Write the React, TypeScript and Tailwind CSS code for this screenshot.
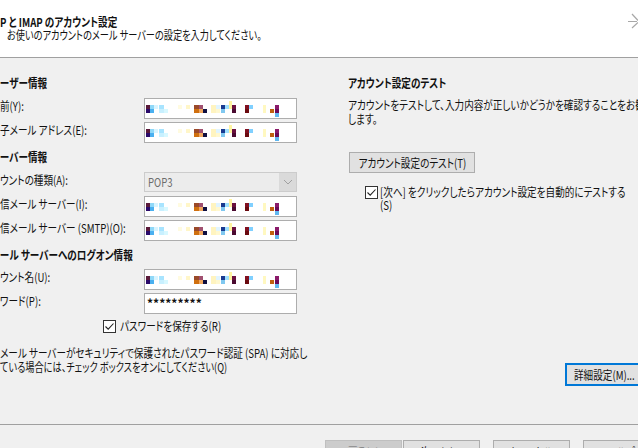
import React from "react";

// pixel-mosaic that hides the personal values inside the text boxes
const mosaic = [
  { x: 1, y: 7, w: 4, h: 4, c: "#5a1a3a" },
  { x: 1, y: 11, w: 4, h: 4, c: "#2a0a6a" },
  { x: 5, y: 7, w: 4, h: 4, c: "#8fd8f8" },
  { x: 5, y: 11, w: 4, h: 4, c: "#4ab0f0" },
  { x: 9, y: 7, w: 4, h: 4, c: "#d8f4ff" },
  { x: 14, y: 7, w: 5, h: 4, c: "#a8e4ff" },
  { x: 14, y: 11, w: 5, h: 4, c: "#c8f0ff" },
  { x: 19, y: 11, w: 4, h: 4, c: "#d8f8ff" },
  { x: 33, y: 7, w: 4, h: 4, c: "#fffbe0" },
  { x: 41, y: 7, w: 4, h: 4, c: "#fff6c8" },
  { x: 49, y: 7, w: 5, h: 4, c: "#9a4a2a" },
  { x: 49, y: 11, w: 5, h: 4, c: "#d07010" },
  { x: 54, y: 7, w: 4, h: 4, c: "#a05070" },
  { x: 54, y: 11, w: 4, h: 4, c: "#f0a860" },
  { x: 58, y: 11, w: 4, h: 4, c: "#101040" },
  { x: 66, y: 7, w: 5, h: 8, c: "#fff4c0" },
  { x: 71, y: 7, w: 4, h: 4, c: "#e0f4ff" },
  { x: 71, y: 11, w: 4, h: 4, c: "#fff8d0" },
  { x: 76, y: 7, w: 4, h: 4, c: "#1a3a90" },
  { x: 76, y: 11, w: 4, h: 4, c: "#80c8f0" },
  { x: 80, y: 7, w: 4, h: 4, c: "#a0e0ff" },
  { x: 84, y: 3, w: 3, h: 8, c: "#fff4a0" },
  { x: 87, y: 7, w: 4, h: 4, c: "#6a1040" },
  { x: 87, y: 11, w: 4, h: 4, c: "#4a0a30" },
  { x: 100, y: 7, w: 4, h: 4, c: "#801020" },
  { x: 100, y: 11, w: 4, h: 4, c: "#6a0a10" },
  { x: 104, y: 7, w: 4, h: 4, c: "#80d0ff" },
  { x: 118, y: 7, w: 3, h: 8, c: "#fff8c0" },
  { x: 125, y: 11, w: 4, h: 4, c: "#c06010" },
  { x: 130, y: 7, w: 4, h: 4, c: "#8a1a6a" },
  { x: 130, y: 11, w: 4, h: 4, c: "#6a0a5a" },
  { x: 130, y: 15, w: 4, h: 4, c: "#60b8f0" },
];

// narrow UI text: Noto's kana are wider than the dialog font, so squeeze horizontally
const T = ({
  children,
  center = false,
  narrow = false,
}: {
  children: React.ReactNode;
  center?: boolean;
  narrow?: boolean;
}) => (
  <span
    className={`inline-block whitespace-nowrap ${narrow ? "scale-x-[0.765]" : "scale-x-[0.8]"} ${
      center ? "origin-center" : "origin-left"
    }`}
  >
    {children}
  </span>
);

const Masked = () => (
  <div className="h-[21px] w-[153px] shrink-0 border border-[#adadad] bg-white">
    <svg width="151" height="19" viewBox="0 0 151 19">
      {mosaic.map((m, i) => (
        <rect key={i} x={m.x} y={m.y - 1} width={m.w} height={m.h} fill={m.c} />
      ))}
    </svg>
  </div>
);

const Check = ({ className = "" }: { className?: string }) => (
  <span
    className={`flex h-[13px] w-[13px] shrink-0 items-center justify-center border border-[#333] bg-white ${className}`}
  >
    <svg width="11" height="11" viewBox="0 0 11 11">
      <path d="M1.5 5.5 L4.2 8.2 L9.5 2.5" fill="none" stroke="#222" strokeWidth="1.1" />
    </svg>
  </span>
);

const Row = ({ label, children, className = "" }: { label: string; children: React.ReactNode; className?: string }) => (
  <div className={`flex items-start ${className}`}>
    <span className="w-[144px] shrink-0 overflow-hidden">
      <T>{label}</T>
    </span>
    {children}
  </div>
);

const Heading = ({ children, className = "" }: { children: React.ReactNode; className?: string }) => (
  <div className={`h-4 font-bold leading-4 ${className}`}>
    <T>{children}</T>
  </div>
);

const Btn = ({ children, className = "" }: { children: React.ReactNode; className?: string }) => (
  <button className={`flex h-[23px] w-[77px] shrink-0 justify-center border pt-[3px] ${className}`}>
    <T center>{children}</T>
  </button>
);

export default function App() {
  return (
    <div className="relative flex h-[448px] w-[638px] flex-col overflow-hidden bg-[#f0f0f0] font-['Noto_Sans_CJK_JP',sans-serif] text-[12px] leading-4 text-[#111] [font-feature-settings:'palt']">
      {/* title band */}
      <div className="relative h-[58px] shrink-0 border-b border-[#a0a0a0] bg-white pt-[15px] leading-[13px]">
        <div className="font-bold">
          <T>P と IMAP のアカウント設定</T>
        </div>
        <div className="pl-[7px]">
          <T narrow>お使いのアカウントのメール サーバーの設定を入力してください。</T>
        </div>
        <svg className="absolute top-[13px] left-[627px]" width="12" height="17" viewBox="0 0 12 17">
          <path d="M5 1 L11 7.5 M5 15 L11 9.5 M1 8.5 L10 8.5" stroke="#a8a8a8" strokeWidth="1.2" fill="none" />
        </svg>
      </div>

      {/* settings body */}
      <div className="flex h-[366px] shrink-0">
        <div className="w-[348px] shrink-0 pt-[17px]">
          <Heading>ーザー情報</Heading>
          <Row label="前(Y):" className="mt-[7px]">
            <Masked />
          </Row>
          <Row label="子メール アドレス(E):" className="mt-[3px]">
            <Masked />
          </Row>
          <Heading className="mt-[6px]">ーバー情報</Heading>
          <Row label="ウントの種類(A):" className="mt-[7px]">
            <div className="flex h-[20px] w-[153px] shrink-0 items-center border border-[#cccccc] bg-[#ececec]">
              <span className="flex-1 pl-[3px] text-[#6d6d6d]">
                <T>POP3</T>
              </span>
              <span className="flex h-[18px] w-[17px] items-center justify-center bg-[#dadada]">
                <svg width="10" height="6" viewBox="0 0 10 6">
                  <path d="M1 1 L5 5 L9 1" stroke="#a0a0a0" fill="none" strokeWidth="1" />
                </svg>
              </span>
            </div>
          </Row>
          <Row label="信メール サーバー(I):" className="mt-[4px]">
            <Masked />
          </Row>
          <Row label="信メール サーバー (SMTP)(O):" className="mt-[3px]">
            <Masked />
          </Row>
          <Heading className="mt-[6px]">ール サーバーへのログオン情報</Heading>
          <Row label="ウント名(U):" className="mt-[6px]">
            <Masked />
          </Row>
          <Row label="ワード(P):" className="mt-[3px]">
            <div className="flex h-[21px] w-[153px] shrink-0 items-start border border-[#adadad] bg-white pl-[2px] leading-[18px] font-bold">
              *********
            </div>
          </Row>
          <div className="mt-[4px] flex items-center gap-[4px] pl-[103px]">
            <Check />
            <T>パスワードを保存する(R)</T>
          </div>
          <div className="mt-[12px] leading-[14px]">
            <div>
              <T>メール サーバーがセキュリティで保護されたパスワード認証 (SPA) に対応し</T>
            </div>
            <div>
              <T narrow>ている場合には、チェック ボックスをオンにしてください(Q)</T>
            </div>
          </div>
        </div>

        <div className="min-w-0 flex-1 pt-[17px]">
          <Heading>アカウント設定のテスト</Heading>
          <div className="mt-[7px] leading-[14px]">
            <div>
              <T>アカウントをテストして、入力内容が正しいかどうかを確認することをお勧め</T>
            </div>
            <div>
              <T>します。</T>
            </div>
          </div>
          <button className="mt-[26px] ml-px flex h-[21px] w-[126px] justify-center border border-[#adadad] bg-[#e1e1e1] pt-[2px]">
            <T center>アカウント設定のテスト(T)</T>
          </button>
          <div className="mt-[12px] ml-[17px] flex gap-[2px]">
            <Check className="mt-[1px]" />
            <div className="leading-[13px]">
              <div>
                <T>[次へ] をクリックしたらアカウント設定を自動的にテストする</T>
              </div>
              <div>
                <T>(S)</T>
              </div>
            </div>
          </div>
          <button className="mt-[152px] ml-[217px] flex h-[23px] w-[100px] border border-[#0078d7] bg-[#e1e1e1] pt-[3px] pl-[8px] shadow-[inset_0_0_0_1px_#0078d7]">
            <T>詳細設定(M)...</T>
          </button>
        </div>
      </div>

      {/* wizard buttons */}
      <div className="flex flex-1 items-start border-t border-[#a0a0a0] pt-[15px] pl-[325px]">
        <Btn className="border-[#bfbfbf] bg-[#cccccc] text-[#8a8a8a]">戻る(B)</Btn>
        <Btn className="ml-px border-[#adadad] bg-[#e1e1e1]">次へ(N) &gt;</Btn>
        <Btn className="ml-[13px] border-[#adadad] bg-[#e1e1e1]">キャンセル</Btn>
        <Btn className="ml-[13px] border-[#adadad] bg-[#e1e1e1]">ヘルプ</Btn>
      </div>
    </div>
  );
}
